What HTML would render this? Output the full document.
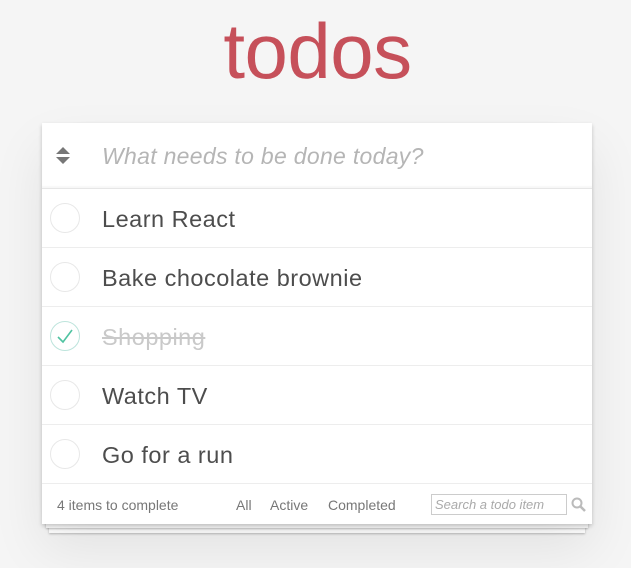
<!DOCTYPE html>
<html><head><style>
body{margin:0;background:#f5f5f5;font-family:"Liberation Sans",Arial,sans-serif;width:631px;height:568px;overflow:hidden;position:relative}
h1{position:absolute;top:6px;left:0;width:631px;text-align:center;margin:0;font-size:78px;font-weight:normal;color:#c6505a;letter-spacing:-0.5px;line-height:90px;padding-left:2px}
.card{position:absolute;left:42px;top:123px;width:550px;background:#fff;box-shadow:0 2px 4px rgba(0,0,0,.2),0 25px 50px rgba(0,0,0,.08)}
.p1,.p2{position:absolute;background:#fff;box-shadow:0 1px 2px rgba(0,0,0,.25)}
.p1{left:46px;width:542px;top:520px;height:8px}
.p2{left:49px;width:536px;top:526px;height:7px}
.hdr{height:65px;border-bottom:1px solid #e6e6e6;position:relative;box-shadow:inset 0 -2px 1px rgba(0,0,0,.03)}
.hdr .ph{position:absolute;left:60px;top:20px;font-size:23px;font-style:italic;color:#b5b5b5;letter-spacing:0.3px}
.row{height:58px;border-bottom:1px solid #ededed;position:relative}
.row .c{position:absolute;left:8px;top:14px;width:28px;height:28px;border:1px solid #e8e8e8;border-radius:50%}
.row .t{position:absolute;left:60px;top:17px;font-size:23.5px;color:#4d4d4d;letter-spacing:0.5px}
.done .t{color:#c9c9c9;text-decoration:line-through}
.done .c{border-color:#bde4dc}
.ftr{height:40px;position:relative;font-size:14px;color:#777}
.ftr span{position:absolute;top:13px}
.s{position:absolute;left:389px;top:10px;width:136px;height:21px;border:1px solid #ccc;font-size:13px;font-style:italic;color:#aaa;line-height:19px;padding-left:3px;box-sizing:border-box}
</style></head><body>
<h1>todos</h1>
<div class="p2"></div><div class="p1"></div>
<div class="card">
<div class="hdr">
<svg style="position:absolute;left:14px;top:24px" width="14" height="17"><path d="M7 0L14 7H0Z M0 10H14L7 17Z" fill="#777"/></svg>
<div class="ph">What needs to be done today?</div></div>
<div class="row"><div class="c"></div><div class="t">Learn React</div></div>
<div class="row"><div class="c"></div><div class="t">Bake chocolate brownie</div></div>
<div class="row done"><div class="c"><svg width="28" height="28"><path d="M7 15L12 20L21 8" stroke="#4fc3a1" stroke-width="1.6" fill="none"/></svg></div><div class="t">Shopping</div></div>
<div class="row"><div class="c"></div><div class="t">Watch TV</div></div>
<div class="row"><div class="c"></div><div class="t">Go for a run</div></div>
<div class="ftr">
<span style="left:15px">4 items to complete</span>
<span style="left:194px">All</span>
<span style="left:228px">Active</span>
<span style="left:286px">Completed</span>
<div class="s">Search a todo item</div>
<svg style="position:absolute;left:529px;top:13px" width="15" height="15"><circle cx="6" cy="6" r="4.5" stroke="#bbb" stroke-width="2" fill="none"/><path d="M9.5 9.5L14 14" stroke="#bbb" stroke-width="2.5"/></svg>
</div></div>
</body></html>
